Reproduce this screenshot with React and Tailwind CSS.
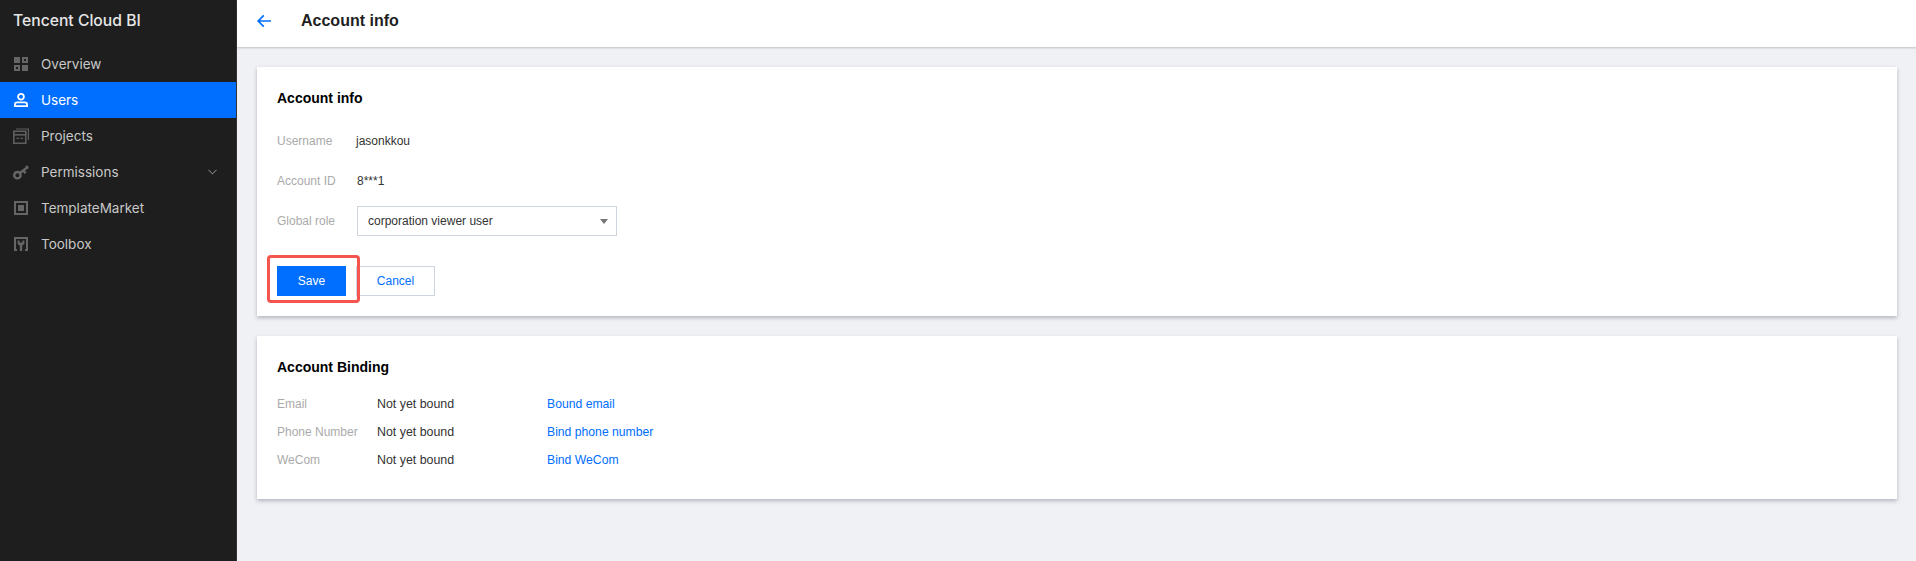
import React from 'react';

function OverviewIcon() {
  return (
    <svg width="14" height="14" viewBox="0 0 14 14" fill="#666">
      <rect x="0" y="0" width="6" height="6" />
      <path fillRule="evenodd" d="M8 0h6v6H8zM10 2v2h2V2z" />
      <path fillRule="evenodd" d="M0 8h6v6H0zM2 10v2h2v-2z" />
      <rect x="8" y="8" width="6" height="6" />
    </svg>
  );
}

function UsersIcon() {
  return (
    <svg width="14" height="14" viewBox="0 0 14 14" fill="none" stroke="#fff" strokeWidth="1.8">
      <circle cx="7" cy="3.8" r="2.9" />
      <path d="M0.9 13.1v-1.4c0-1.3 1.1-2.3 2.5-2.3h7.2c1.4 0 2.5 1 2.5 2.3v1.4z" />
    </svg>
  );
}

function ProjectsIcon() {
  return (
    <svg width="16" height="16" viewBox="0 0 16 16" fill="none" stroke="#5e5e5e">
      <rect x="0.8" y="3.3" width="12" height="12" strokeWidth="1.6" />
      <path d="M0.8 6.8h12" strokeWidth="1.6" />
      <path d="M3.5 10.4h2.5M7.5 10.4h2.5" strokeWidth="1.4" />
      <path d="M3 1h12.4v11" strokeWidth="1.2" />
    </svg>
  );
}

function KeyIcon() {
  return (
    <svg width="16" height="16" viewBox="0 0 16 16" fill="none" stroke="#666" strokeWidth="2.4">
      <circle cx="4.4" cy="11.2" r="3.2" />
      <path d="M6.8 9l7.6-5.6M11 7.2l1.6 2M13.2 1.8l1.8 2.8" />
    </svg>
  );
}

function TemplateIcon() {
  return (
    <svg width="14" height="14" viewBox="0 0 14 14" fill="#666">
      <path fillRule="evenodd" d="M0 0h14v14H0zM2 2v10h10V2z" />
      <rect x="4" y="4" width="6" height="6" />
    </svg>
  );
}

function ToolboxIcon() {
  return (
    <svg width="14" height="14" viewBox="0 0 14 14" fill="#666">
      <path d="M0 0h14v14h-3v-2h1V2H2v10h1v2H0z" />
      <path d="M3.6 3.4h2v2.2h2.8V3.4h2v3.6L8.2 8.4V14H5.8V8.4L3.6 7z" />
    </svg>
  );
}

const navItems = [
  { label: 'Overview', icon: <OverviewIcon /> },
  { label: 'Users', icon: <UsersIcon />, active: true },
  { label: 'Projects', icon: <ProjectsIcon />, wide: true },
  { label: 'Permissions', icon: <KeyIcon />, arrow: true, wide: true },
  { label: 'TemplateMarket', icon: <TemplateIcon /> },
  { label: 'Toolbox', icon: <ToolboxIcon /> },
];

const bindings = [
  { label: 'Email', action: 'Bound email' },
  { label: 'Phone Number', action: 'Bind phone number' },
  { label: 'WeCom', action: 'Bind WeCom' },
];

function App() {
  return (
    <div className="flex h-[561px] overflow-hidden bg-[#f0f1f5] font-['Liberation_Sans',sans-serif] text-xs">
      {/* Sidebar */}
      <aside className="w-[237px] shrink-0 bg-[#1e1e1e] border-r border-[#333] font-['Inter',sans-serif]">
        <div className="h-[46px] pl-[13px] pb-[4px] flex items-center text-[15.7px] font-medium text-[#e6e6e6]">
          Tencent Cloud BI
        </div>
        <nav>
          {navItems.map(item => (
            <div
              key={item.label}
              className={`h-9 flex items-center text-[13.5px] ${item.active ? 'bg-[#006eff] text-white' : 'text-[#c8c8c8]'}`}
            >
              <span className={`w-[41px] shrink-0 flex items-center ${item.wide ? 'pl-[13px]' : 'pl-[14px]'}`}>{item.icon}</span>
              <span className="flex-1 pt-[2px]">{item.label}</span>
              {item.arrow && (
                <svg className="mr-[19px]" width="9" height="6" viewBox="0 0 9 6" fill="none" stroke="#777" strokeWidth="1.1">
                  <path d="M0.5 0.8l4 4 4-4" />
                </svg>
              )}
            </div>
          ))}
        </nav>
      </aside>

      <div className="flex-1 min-w-0">
        {/* Top bar */}
        <header className="h-[47px] pb-[5px] bg-white flex items-center shadow-[0_1px_2px_rgba(0,0,0,0.2)] relative">
          <svg className="ml-[20px]" width="14" height="14" viewBox="0 0 14 14" fill="none" stroke="#006eff" strokeWidth="1.7">
            <path d="M14 7H1.2M6.8 1.4L1.2 7l5.6 5.6" />
          </svg>
          <h1 className="ml-[30px] text-[16px] font-bold text-[#1f1f1f]">Account info</h1>
        </header>

        <main className="pt-5 pl-5 pr-[19px] flex flex-col gap-5">
          {/* Account info card */}
          <section className="h-[249px] bg-white px-5 pt-[21px] shadow-[0_2px_4px_rgba(54,58,80,0.32)]">
            <h2 className="text-sm font-bold text-black leading-[20px]">Account info</h2>
            <div className="mt-[23px] flex items-center h-[20px]">
              <span className="w-[79px] text-[#aaa]">Username</span>
              <span className="text-[#333]">jasonkkou</span>
            </div>
            <div className="mt-[20px] flex items-center h-[20px]">
              <span className="w-[80px] text-[#aaa]">Account ID</span>
              <span className="text-[#333]">8***1</span>
            </div>
            <div className="mt-[15px] flex items-center">
              <span className="w-[80px] text-[#aaa]">Global role</span>
              <div className="w-[260px] h-[30px] border border-[#cfd5de] flex items-center justify-between pl-[10px] pr-[8px] text-[#333]">
                corporation viewer user
                <svg width="8" height="5" viewBox="0 0 8 5" fill="#777">
                  <path d="M0 0h8L4 5z" />
                </svg>
              </div>
            </div>
            <div className="mt-[30px] flex gap-[10px] relative">
              <button className="w-[69px] h-[30px] bg-[#006eff] text-white text-xs">Save</button>
              <button className="w-[79px] h-[30px] bg-white border border-[#cfd5de] text-[#006eff] text-xs">Cancel</button>
              <span className="absolute left-[-10px] top-[-11px] w-[93px] h-[48px] border-[3px] border-[#f4554f] rounded-[4px]" />
            </div>
          </section>

          {/* Account Binding card */}
          <section className="h-[163px] bg-white px-5 pt-[21px] shadow-[0_2px_4px_rgba(54,58,80,0.32)]">
            <h2 className="text-sm font-bold text-black leading-[20px]">Account Binding</h2>
            <div className="mt-[20px] flex flex-col gap-[14px]">
              {bindings.map(row => (
                <div key={row.label} className="flex items-center h-[14px]">
                  <span className="w-[100px] text-[#aaa]">{row.label}</span>
                  <span className="w-[170px] text-[#333] text-[12.4px]">Not yet bound</span>
                  <a className="text-[#006eff] text-[12.2px]">{row.action}</a>
                </div>
              ))}
            </div>
          </section>
        </main>
      </div>
    </div>
  );
}

export default App;
